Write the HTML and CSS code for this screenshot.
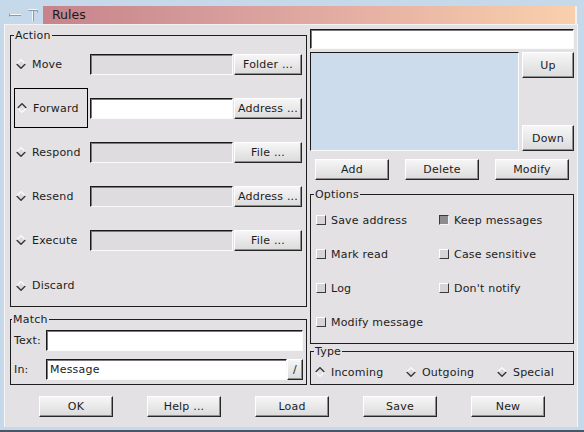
FILE: index.html
```html
<!DOCTYPE html>
<html>
<head>
<meta charset="utf-8">
<title>Rules</title>
<link rel="stylesheet" href="styles.css">
</head>
<body>
<div class="window">
  <div class="titlebar">
    <div class="tb-ctrl">
      <svg width="43" height="18" viewBox="0 0 43 18">
        <path d="M9.5 7.5 V10.5" stroke="#8a9aac" stroke-width="1"/>
        <path d="M10 8.5 H21" stroke="#f4f8fc" stroke-width="1"/>
        <path d="M10 9.5 H21" stroke="#8a9aac" stroke-width="1"/>
        <path d="M28.5 3.5 H37.5" stroke="#f4f8fc" stroke-width="1"/>
        <path d="M28.5 4.5 H37.5 V6.5" stroke="#8a9aac" stroke-width="1" fill="none"/>
        <path d="M32.5 5 V15" stroke="#f4f8fc" stroke-width="1"/>
        <path d="M33.5 5 V15" stroke="#8a9aac" stroke-width="1"/>
      </svg>
    </div>
    <div class="tb-title">Rules</div>
  </div>
  <div class="client">
    <div class="main">
      <div class="col-left">
        <fieldset class="group action">
          <legend>Action</legend>
          <div class="action-grid">
            <div class="choice"><svg class="radio" width="10" height="10" viewBox="0 0 10 10"><path d="M5 0.7 L9.3 5 L5 9.3 L0.7 5Z" fill="#dcdadc"/><path d="M0.7 5 L5 0.7 L9.3 5" fill="none" stroke="#ffffff" stroke-width="1.2"/><path d="M0.7 5 L5 9.3 L9.3 5" fill="none" stroke="#3a3a3a" stroke-width="1.4"/></svg><span>Move</span></div>
            <div class="field"></div>
            <div class="btn">Folder ...</div>

            <div class="choice focus"><svg class="radio" width="10" height="10" viewBox="0 0 10 10"><path d="M5 0.7 L9.3 5 L5 9.3 L0.7 5Z" fill="#e4e2e4"/><path d="M0.7 5 L5 9.3 L9.3 5" fill="none" stroke="#ffffff" stroke-width="1.2"/><path d="M0.7 5 L5 0.7 L9.3 5" fill="none" stroke="#3a3a3a" stroke-width="1.4"/></svg><span>Forward</span></div>
            <div class="field white"></div>
            <div class="btn">Address ...</div>

            <div class="choice"><svg class="radio" width="10" height="10" viewBox="0 0 10 10"><path d="M5 0.7 L9.3 5 L5 9.3 L0.7 5Z" fill="#dcdadc"/><path d="M0.7 5 L5 0.7 L9.3 5" fill="none" stroke="#ffffff" stroke-width="1.2"/><path d="M0.7 5 L5 9.3 L9.3 5" fill="none" stroke="#3a3a3a" stroke-width="1.4"/></svg><span>Respond</span></div>
            <div class="field"></div>
            <div class="btn">File ...</div>

            <div class="choice"><svg class="radio" width="10" height="10" viewBox="0 0 10 10"><path d="M5 0.7 L9.3 5 L5 9.3 L0.7 5Z" fill="#dcdadc"/><path d="M0.7 5 L5 0.7 L9.3 5" fill="none" stroke="#ffffff" stroke-width="1.2"/><path d="M0.7 5 L5 9.3 L9.3 5" fill="none" stroke="#3a3a3a" stroke-width="1.4"/></svg><span>Resend</span></div>
            <div class="field"></div>
            <div class="btn">Address ...</div>

            <div class="choice"><svg class="radio" width="10" height="10" viewBox="0 0 10 10"><path d="M5 0.7 L9.3 5 L5 9.3 L0.7 5Z" fill="#dcdadc"/><path d="M0.7 5 L5 0.7 L9.3 5" fill="none" stroke="#ffffff" stroke-width="1.2"/><path d="M0.7 5 L5 9.3 L9.3 5" fill="none" stroke="#3a3a3a" stroke-width="1.4"/></svg><span>Execute</span></div>
            <div class="field"></div>
            <div class="btn">File ...</div>

            <div class="choice last"><svg class="radio" width="10" height="10" viewBox="0 0 10 10"><path d="M5 0.7 L9.3 5 L5 9.3 L0.7 5Z" fill="#dcdadc"/><path d="M0.7 5 L5 0.7 L9.3 5" fill="none" stroke="#ffffff" stroke-width="1.2"/><path d="M0.7 5 L5 9.3 L9.3 5" fill="none" stroke="#3a3a3a" stroke-width="1.4"/></svg><span>Discard</span></div>
          </div>
        </fieldset>

        <fieldset class="group match">
          <legend>Match</legend>
          <div class="match-grid">
            <span class="mlabel">Text:</span>
            <div class="field white"></div>
            <span class="mlabel">In:</span>
            <div class="combo">
              <div class="field white text">Message</div>
              <div class="btn small">/</div>
            </div>
          </div>
        </fieldset>
      </div>

      <div class="col-right">
        <div class="field white top-input"></div>
        <div class="list-area">
          <div class="listbox"></div>
          <div class="list-btns">
            <div class="btn tall">Up</div>
            <div class="btn tall">Down</div>
          </div>
        </div>
        <div class="edit-btns">
          <div class="btn">Add</div>
          <div class="btn">Delete</div>
          <div class="btn">Modify</div>
        </div>

        <fieldset class="group options">
          <legend>Options</legend>
          <div class="opt-grid">
            <div class="check"><span class="box"></span>Save address</div>
            <div class="check"><span class="box on"></span>Keep messages</div>
            <div class="check"><span class="box"></span>Mark read</div>
            <div class="check"><span class="box"></span>Case sensitive</div>
            <div class="check"><span class="box"></span>Log</div>
            <div class="check"><span class="box"></span>Don't notify</div>
            <div class="check"><span class="box"></span>Modify message</div>
          </div>
        </fieldset>

        <fieldset class="group type">
          <legend>Type</legend>
          <div class="type-row">
            <div class="choice"><svg class="radio" width="10" height="10" viewBox="0 0 10 10"><path d="M5 0.7 L9.3 5 L5 9.3 L0.7 5Z" fill="#e4e2e4"/><path d="M0.7 5 L5 9.3 L9.3 5" fill="none" stroke="#ffffff" stroke-width="1.2"/><path d="M0.7 5 L5 0.7 L9.3 5" fill="none" stroke="#3a3a3a" stroke-width="1.4"/></svg><span>Incoming</span></div>
            <div class="choice"><svg class="radio" width="10" height="10" viewBox="0 0 10 10"><path d="M5 0.7 L9.3 5 L5 9.3 L0.7 5Z" fill="#dcdadc"/><path d="M0.7 5 L5 0.7 L9.3 5" fill="none" stroke="#ffffff" stroke-width="1.2"/><path d="M0.7 5 L5 9.3 L9.3 5" fill="none" stroke="#3a3a3a" stroke-width="1.4"/></svg><span>Outgoing</span></div>
            <div class="choice"><svg class="radio" width="10" height="10" viewBox="0 0 10 10"><path d="M5 0.7 L9.3 5 L5 9.3 L0.7 5Z" fill="#dcdadc"/><path d="M0.7 5 L5 0.7 L9.3 5" fill="none" stroke="#ffffff" stroke-width="1.2"/><path d="M0.7 5 L5 9.3 L9.3 5" fill="none" stroke="#3a3a3a" stroke-width="1.4"/></svg><span>Special</span></div>
          </div>
        </fieldset>
      </div>
    </div>

    <div class="footer">
      <div class="btn">OK</div>
      <div class="btn">Help ...</div>
      <div class="btn">Load</div>
      <div class="btn">Save</div>
      <div class="btn">New</div>
    </div>
  </div>
</div>
</body>
</html>
```

FILE: styles.css
```css
html, body {
  margin: 0;
  padding: 0;
}
body {
  width: 584px;
  height: 432px;
  overflow: hidden;
  font-family: "DejaVu Sans", "Verdana", sans-serif;
  font-size: 11px;
  letter-spacing: 0.2px;
  color: #1c1c1c;
}
.window {
  width: 584px;
  height: 432px;
  box-sizing: border-box;
  background: #c6d9ea;
  border-bottom: 2px solid #4a5666;
}
.titlebar {
  display: flex;
  height: 24px;
  box-sizing: border-box;
  padding-top: 6px;
  background: #c6d9ea;
}
.tb-ctrl {
  width: 43px;
  height: 18px;
}
.tb-ctrl svg {
  display: block;
}
.tb-title {
  flex: 1;
  height: 18px;
  margin-right: 7px;
  box-sizing: border-box;
  padding-left: 9px;
  line-height: 18px;
  font-size: 12.5px;
  letter-spacing: 0;
  color: #1a1a1a;
  border-right: 2px solid #eef2f6;
  background: linear-gradient(to right, #c7838a 0%, #d49a9a 30%, #e6b0a4 60%, #f2c4a8 85%, #f9d0ad 100%);
}
.client {
  height: 403px;
  box-sizing: border-box;
  margin: 0 6px 0 4px;
  padding: 4px 3px 0 5px;
  background: #e3e1e3;
  border-top: 1px solid #f2f2f2;
  border-left: 1px solid #f6f6f6;
  border-right: 1px solid #f6f6f6;
}
.main {
  display: flex;
  gap: 3px;
}
.col-left {
  width: 297px;
  display: flex;
  flex-direction: column;
}
.col-right {
  width: 264px;
  display: flex;
  flex-direction: column;
}

/* group boxes */
.group {
  margin: 0;
  padding: 0;
  border: 1px solid #1e1e1e;
  min-width: 0;
}
.group legend {
  margin-left: 3px;
  padding: 0 1px;
  line-height: 13px;
  height: 13px;
}
.match legend {
  margin-left: 1px;
}

/* action */
.action-grid {
  display: grid;
  grid-template-columns: 79px 143px 69px;
  grid-auto-rows: 44px;
  column-gap: 0;
  padding-right: 3px;
}
.action-grid .btn {
  margin-left: 1px;
  align-self: center;
}
.action-grid .field {
  align-self: center;
}
.choice {
  display: flex;
  align-items: center;
  gap: 6px;
  padding-left: 5px;
}
.choice.focus {
  margin: 2px 2px 2px 3px;
  border: 1px solid #000;
  padding-left: 2px;
}
.choice.last {
  height: 45px;
  padding-top: 2px;
  box-sizing: border-box;
}
.radio {
  display: block;
  flex: none;
}

/* fields */
.field {
  height: 21px;
  box-sizing: border-box;
  border-top: 1px solid #1a1a1a;
  border-left: 1px solid #1a1a1a;
  border-bottom: 1px solid #fafafa;
  border-right: 1px solid #fafafa;
  box-shadow: inset 1px 1px 0 #7a787a;
  background: #dedcde;
}
.field.white {
  background: #ffffff;
}
.field.text {
  padding-left: 3px;
  line-height: 19px;
}

/* buttons */
.btn {
  height: 21px;
  box-sizing: border-box;
  display: flex;
  align-items: center;
  justify-content: center;
  background: linear-gradient(#f6f6f6, #dcdbdc);
  border-top: 1px solid #ffffff;
  border-left: 1px solid #ffffff;
  border-right: 1px solid #262626;
  border-bottom: 1px solid #262626;
  box-shadow: inset -1px -1px 0 #8e8e8e;
  color: #1c1c1c;
}
.btn.small {
  width: 16px;
  flex: none;
}

/* match */
.match {
  margin-top: 6px;
}
.match-grid {
  display: grid;
  grid-template-columns: 32px 1fr;
  grid-template-rows: 21px 21px;
  row-gap: 8px;
  padding: 4px 3px 4px 3px;
  align-items: center;
}
.combo {
  display: flex;
}
.combo .field {
  flex: 1;
}

/* right column */
.top-input {
  height: 20px;
}
.list-area {
  display: flex;
  gap: 3px;
  margin-top: 3px;
  height: 99px;
}
.listbox {
  width: 209px;
  box-sizing: border-box;
  background: #cddcec;
  border-top: 1px solid #1a1a1a;
  border-left: 1px solid #1a1a1a;
  border-bottom: 1px solid #fafafa;
  border-right: 1px solid #fafafa;
}
.list-btns {
  width: 52px;
  display: flex;
  flex-direction: column;
  justify-content: space-between;
}
.btn.tall {
  height: 26px;
}
.edit-btns {
  display: flex;
  gap: 16px;
  padding-left: 5px;
  margin-top: 8px;
}
.edit-btns .btn {
  width: 74px;
}

/* options */
.options {
  margin-top: 8px;
}
.opt-grid {
  display: grid;
  grid-template-columns: 123px 1fr;
  grid-auto-rows: 34px;
  padding: 2px 0 4px 5px;
  height: 136px;
}
.check {
  display: flex;
  align-items: center;
  gap: 5px;
}
.box {
  width: 10px;
  height: 10px;
  box-sizing: border-box;
  flex: none;
  background: #d6d4d6;
  border-top: 1px solid #ffffff;
  border-left: 1px solid #ffffff;
  border-right: 1px solid #3a3a3a;
  border-bottom: 1px solid #3a3a3a;
}
.box.on {
  background: #8e8c8e;
  border-top: 1px solid #3a3a3a;
  border-left: 1px solid #3a3a3a;
  border-right: 1px solid #f4f4f4;
  border-bottom: 1px solid #f4f4f4;
}

/* type */
.type {
  margin-top: 1px;
}
.type-row {
  display: grid;
  grid-template-columns: 91px 91px 1fr;
  height: 20px;
  padding: 4px 0 2px 4px;
}
.type-row .choice {
  padding-left: 0;
}

/* footer */
.footer {
  display: flex;
  gap: 34px;
  padding-left: 29px;
  margin-top: 11px;
}
.footer .btn {
  width: 74px;
}
```
